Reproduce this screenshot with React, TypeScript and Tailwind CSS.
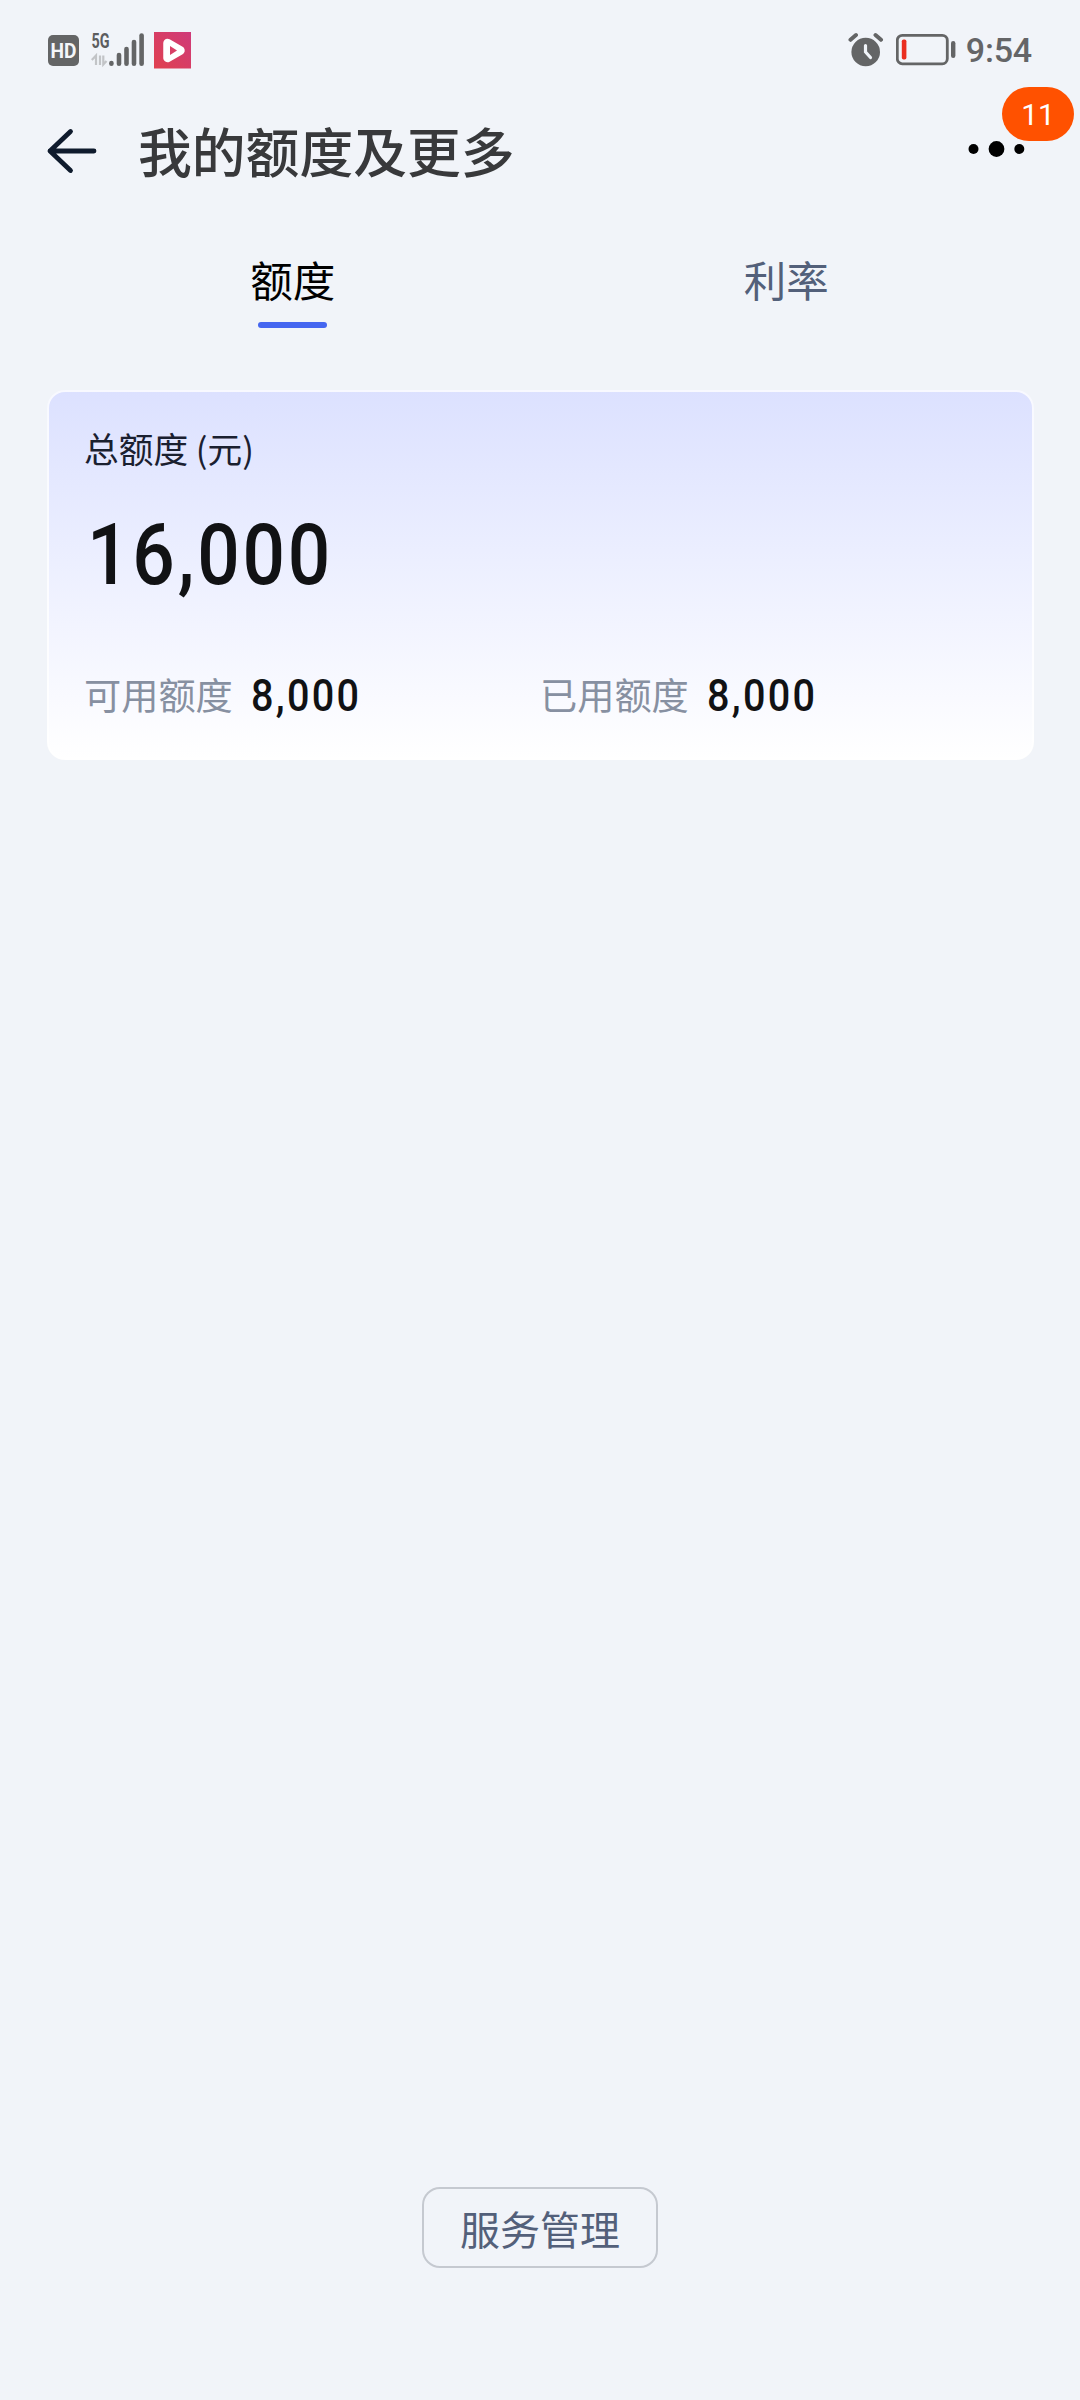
import { useState } from 'react'

const abas = ['额度', '利率']

function StatusBar() {

  return (
    <div className="h-[98px] flex items-start justify-between pl-[48px] pr-[48px] pt-[32px]">

      <div className="flex items-start">

        <svg width="32" height="38" viewBox="0 0 32 38">
          <rect x="0" y="3" width="31" height="31" rx="5" fill="#646566" />
          <text
            x="15.5"
            y="26"
            textAnchor="middle"
            fontFamily="Roboto, sans-serif"
            fontWeight="700"
            fontSize="20"
            textLength="26"
            lengthAdjust="spacingAndGlyphs"
            fill="#f4f6f9"
          >
            HD
          </text>
        </svg>

        <svg className="-mt-[8px] ml-[11px]" width="54" height="46" viewBox="0 -8 54 46">
          <text
            x="0.5"
            y="15.5"
            fontFamily="Roboto, sans-serif"
            fontWeight="700"
            fontSize="20"
            textLength="18"
            lengthAdjust="spacingAndGlyphs"
            fill="#5c5d5e"
          >
            5G
          </text>
          <path
            d="M0.800 28 L5 23.500 V33 M9 23.500 V33 M12.300 23.500 V32.500 L15.500 29"
            fill="none"
            stroke="#c2c4c7"
            strokeWidth="2.2"
          />
          <g stroke="#646566" strokeWidth="4.6" strokeLinecap="round">
            <path d="M20.4 31 V31.8" />
            <path d="M28 23 V31.8" />
            <path d="M35.5 17 V31.8" />
            <path d="M43 10 V31.8" />
            <path d="M50.6 3.5 V31.8" />
          </g>
        </svg>

        <svg className="ml-[9px]" width="37" height="37" viewBox="0 0 37 37">
          <defs>
            <linearGradient id="play" x1="1" y1="0" x2="0" y2="1">
              <stop offset="0" stopColor="#cf3a7a" />
              <stop offset="1" stopColor="#e0414f" />
            </linearGradient>
          </defs>
          <rect width="37" height="36.500" fill="url(#play)" />
          <path
            d="M13.500 11 L26.500 18.500 L13.500 26 Z"
            fill="#fff"
            stroke="#fff"
            strokeWidth="8.500"
            strokeLinejoin="round"
          />
          <path d="M16 14 L23 18.500 L16 23 Z" fill="#d83f66" />
        </svg>

      </div>

      <div className="flex items-start">

        <svg width="36" height="38" viewBox="0 0 36 38">
          <circle cx="17.700" cy="20" r="14.300" fill="#646566" />
          <path
            d="M2.500 7.800 L8 3 M27.500 3 L33 7.800"
            stroke="#646566"
            strokeWidth="4"
            strokeLinecap="round"
          />
          <path
            d="M17.500 13.500 V20 L22.500 25.500"
            fill="none"
            stroke="#f1f4f9"
            strokeWidth="3.200"
            strokeLinecap="round"
          />
        </svg>

        <svg className="ml-[12px]" width="61" height="38" viewBox="0 0 61 38">
          <rect
            x="1.300"
            y="3.300"
            width="50"
            height="28.500"
            rx="5"
            fill="none"
            stroke="#646566"
            strokeWidth="2.800"
          />
          <rect x="5.800" y="7.500" width="4.600" height="20" rx="1.800" fill="#ea2e20" />
          <rect x="55" y="9" width="4.400" height="17" rx="2.200" fill="#646566" />
        </svg>

        <span className="ml-[9px] h-[37px] leading-[37px] text-[34px] tracking-[-0.2px] font-medium text-[#646567] font-[Roboto,sans-serif]">
          9:54
        </span>

      </div>

    </div>
  )
}

function Valor({ titulo, valor }: { titulo: string, valor: string }) {

  return (
    <div className="flex items-center w-[456px] h-[54px]">

      <span className="text-[37.2px] leading-[54px] text-[#8790a1]">
        {titulo}
      </span>

      <span className="ml-[18px] mt-[3px] text-[45px] leading-[54px] tracking-[2.6px] font-medium text-[#111214] origin-left scale-x-[0.88] font-[Roboto,sans-serif]">
        {valor}
      </span>

    </div>
  )
}

export default function LimitePage() {

  const [aba, setAba] =
    useState('额度')

  return (
    <div className="w-[1080px] h-[2400px] bg-[#f1f4f9] flex flex-col font-['Noto_Sans_CJK_SC',sans-serif]">

      <StatusBar />

      <header className="h-[106px] flex items-center pl-[46px] pr-[54px]">

        <button>
          <svg width="52" height="48" viewBox="0 0 52 48">
            <path
              d="M24.500 4.500 L4 24 L24.500 43.500 M4 24 H48"
              fill="none"
              stroke="#0f1b2d"
              strokeWidth="4.800"
              strokeLinecap="round"
              strokeLinejoin="round"
            />
          </svg>
        </button>

        <h1 className="ml-[40px] mb-[2px] text-[53.8px] leading-[80px] font-medium text-[#38393b]">
          我的额度及更多
        </h1>

        <button className="relative ml-auto mb-[4px]">
          <svg width="58" height="18" viewBox="0 0 58 18">
            <circle cx="5.500" cy="9" r="5" fill="#000" />
            <circle cx="28.500" cy="9" r="7.900" fill="#000" />
            <circle cx="51.300" cy="9" r="5" fill="#000" />
          </svg>
          <span className="absolute left-[34px] bottom-[17px] w-[72px] h-[54px] rounded-full bg-[#ff5100] text-white text-[30px] leading-[55px] text-center font-[Roboto,sans-serif]">
            11
          </span>
        </button>

      </header>

      <nav className="h-[185px] grid grid-cols-2 pl-[46px] pr-[47px] pt-[44px]">

        {abas.map((item) => (
          <button
            key={item}
            onClick={() => setAba(item)}
            className="flex flex-col items-center"
          >
            <span
              className={
                aba === item
                  ? 'text-[42.5px] leading-[62px] text-black'
                  : 'text-[42.5px] leading-[62px] text-[#53607a]'
              }
            >
              {item}
            </span>

            {aba === item && (
              <span className="mt-[12px] w-[69px] h-[6px] rounded-full bg-[#4566f0]" />
            )}
          </button>
        ))}

      </nav>

      <main className="ml-[47px] mr-[46px] mt-px h-[370px] rounded-[18px] border-2 border-white/80 bg-origin-border bg-linear-to-b from-[#dce1ff] to-white pl-[35px] flex flex-col">

        <p className="mt-[31px] text-[34.7px] leading-[50px] text-[#1a2030]">
          总额度 (元)
        </p>

        <p className="mt-[32px] ml-[3px] text-[85px] leading-[100px] w-fit font-medium tracking-[3.2px] text-[#111214] origin-left scale-x-[0.88] font-[Roboto,sans-serif]">
          16,000
        </p>

        <div className="mt-[62px] flex">
          <Valor titulo="可用额度" valor="8,000" />
          <Valor titulo="已用额度" valor="8,000" />
        </div>

      </main>

      <footer className="mt-auto mb-[132px] flex justify-center">
        <button className="w-[236px] h-[81px] rounded-[18px] border-2 border-[#c5c9d0] text-[40px] leading-[78px] text-[#53607a]">
          服务管理
        </button>
      </footer>

    </div>
  )
}
